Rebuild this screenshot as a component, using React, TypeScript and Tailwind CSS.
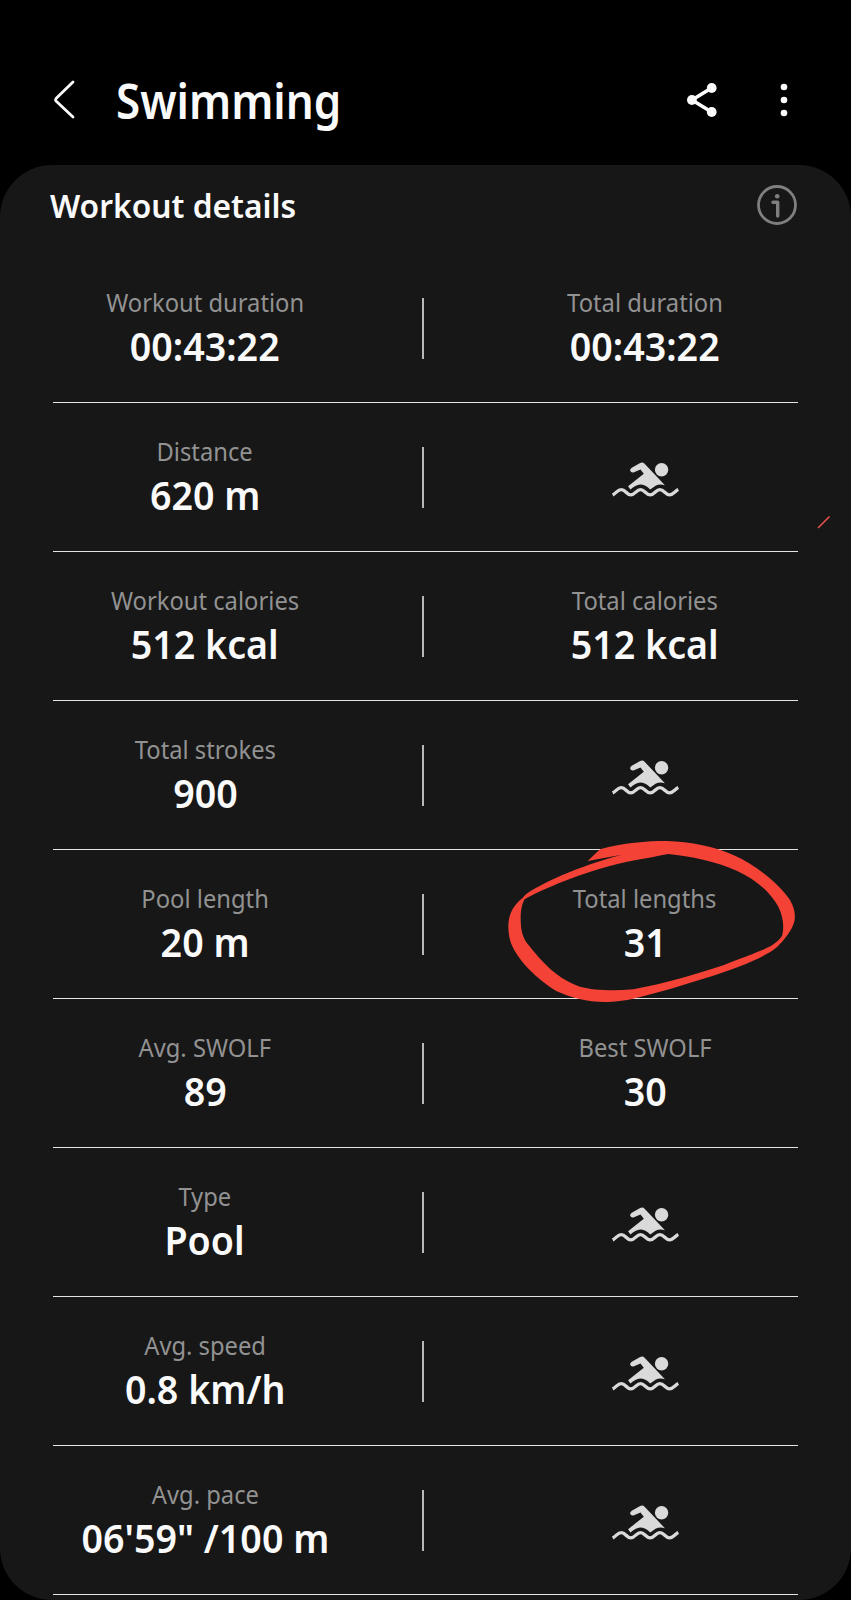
type Stat = {
  label: string;
  value: string;
};

const rows: [Stat, Stat | null][] = [
  [
    { label: "Workout duration", value: "00:43:22" },
    { label: "Total duration", value: "00:43:22" },
  ],
  [{ label: "Distance", value: "620 m" }, null],
  [
    { label: "Workout calories", value: "512 kcal" },
    { label: "Total calories", value: "512 kcal" },
  ],
  [{ label: "Total strokes", value: "900" }, null],
  [
    { label: "Pool length", value: "20 m" },
    { label: "Total lengths", value: "31" },
  ],
  [
    { label: "Avg. SWOLF", value: "89" },
    { label: "Best SWOLF", value: "30" },
  ],
  [{ label: "Type", value: "Pool" }, null],
  [{ label: "Avg. speed", value: "0.8 km/h" }, null],
  [{ label: "Avg. pace", value: "06'59\" /100 m" }, null],
];

function SwimmerIcon() {
  return (
    <svg viewBox="156 96 200 104" className="mt-[59px] h-[35px] w-[67px]" fill="#dadada">
      <circle cx="304" cy="119" r="20" />
      <path d="M215 113 L240 99 Q248 95 254 102 L314 165 Q298 160 286 167 L270 178 Q256 163 240 163 Q226 164 211 178 L204 168 L251 131 L241 118 L220 127 Q212 128 210 121 Q210 116 215 113 Z" />
      <path
        d="M158 194 C168 189 173 178 184 178 C196 178 200 194 212 194 C225 194 229 178 241 178 C253 178 258 194 270 194 C282 194 287 178 299 178 C311 178 316 194 328 194 C339 194 344 183 354 178"
        fill="none"
        stroke="#dadada"
        strokeWidth="10"
      />
    </svg>
  );
}

function StatCell({ stat }: { stat: Stat }) {
  return (
    <div className="flex w-[304px] flex-col items-center whitespace-nowrap pt-[31px]">
      <p className="scale-x-[0.95] text-[25px] leading-[34px] text-[#929292]">{stat.label}</p>
      <p className="mt-[3px] scale-x-[0.965] text-[39px] leading-[48px] font-semibold text-[#fafafa]">{stat.value}</p>
    </div>
  );
}

function MarkerCircle() {
  return (
    <svg viewBox="0 0 990 600" className="pointer-events-none absolute top-[820px] left-[490px] h-[200px] w-[330px]">
      <path
        fill="#f44336"
        fillRule="evenodd"
        d="M293 123 L330 88 C400 68 470 63 530 63 C600 64 680 82 730 105 C800 135 870 195 900 240 C914 265 917 285 913 305 C905 332 885 357 862 380 C825 412 740 445 650 473 C580 495 515 515 450 531 C400 545 370 545 345 546 C290 546 245 534 200 514 C160 490 130 462 105 435 C70 392 56 368 55 320 C55 280 72 254 98 234 C103 228 107 224 112 220 C150 192 260 140 395 104 Z M535 102 C600 108 680 125 740 152 C800 180 840 215 865 260 C882 295 882 325 876 348 C858 373 835 383 800 397 C770 410 735 422 700 436 C620 462 530 490 430 508 C370 513 310 511 270 500 C200 475 160 430 110 368 C95 345 92 325 92 290 C93 265 97 250 104 238 C150 210 250 170 330 146 C400 125 470 115 535 102 Z"
      />
    </svg>
  );
}

export default function App() {
  return (
    <div className="relative h-[1600px] w-[851px] overflow-hidden bg-black font-['Noto_Sans',sans-serif]">
      <header className="flex h-[165px] items-center pt-[34px] pl-[53px]">
        <svg viewBox="0 0 22 40" className="h-10 w-[22px]" fill="none" stroke="#fafafa" strokeWidth="2.8" strokeLinecap="round" strokeLinejoin="round">
          <path d="M20 2 L3 18.5 Q2 19.8 3 21 L20 37" />
        </svg>
        <h1 className="mt-[2px] ml-[41px] origin-left scale-x-[0.915] text-[48px] leading-[60px] font-semibold text-[#fafafa]">Swimming</h1>
        <svg viewBox="0 0 30 36" className="mr-[63px] ml-auto h-9 w-[30px]" fill="#fafafa" stroke="#fafafa">
          <path d="M24.5 6 L5 18 L24.5 30" fill="none" strokeWidth="3.6" />
          <circle cx="24.7" cy="6" r="4.9" stroke="none" />
          <circle cx="4.9" cy="18" r="4.9" stroke="none" />
          <circle cx="24.7" cy="30" r="4.9" stroke="none" />
        </svg>
        <svg viewBox="0 0 8 34" className="mr-[63px] h-[34px] w-2" fill="#fafafa">
          <circle cx="4" cy="4" r="3.3" />
          <circle cx="4" cy="17" r="3.3" />
          <circle cx="4" cy="30" r="3.3" />
        </svg>
      </header>

      <main className="h-[1435px] rounded-[52px] bg-[#171717]">
        <div className="flex h-[89px] items-start justify-between pr-[54px] pl-[50px]">
          <h2 className="mt-[19px] origin-left scale-x-[0.962] text-[33px] leading-[44px] font-semibold text-[#fafafa]">Workout details</h2>
          <svg viewBox="0 0 40 40" className="mt-5 h-10 w-10" fill="none" stroke="#7f7f7f">
            <circle cx="20" cy="20" r="18.5" strokeWidth="2.8" />
            <path d="M16 17.3 H20.7 V31" strokeWidth="3.4" strokeLinecap="round" strokeLinejoin="round" />
            <circle cx="20.2" cy="11.2" r="2.3" fill="#7f7f7f" stroke="none" />
          </svg>
        </div>
        <div className="mr-[53px] ml-[53px]">
          {rows.map(([left, right]) => (
            <div key={left.label} className="flex h-[149px] items-start border-b border-[#e4e4e4]">
              <StatCell stat={left} />
              <div className="mt-[44px] mr-[69px] ml-[65px] h-[61px] w-[2px] shrink-0 bg-[#b8b8b8]" />
              {right ? (
                <StatCell stat={right} />
              ) : (
                <div className="flex w-[304px] justify-center">
                  <SwimmerIcon />
                </div>
              )}
            </div>
          ))}
        </div>
      </main>

      <MarkerCircle />
      <svg viewBox="0 0 14 14" className="absolute top-[515px] left-[817px] h-3.5 w-3.5">
        <path d="M1 13 L12.5 1.5" stroke="#e8504a" strokeWidth="1.6" />
      </svg>
    </div>
  );
}
